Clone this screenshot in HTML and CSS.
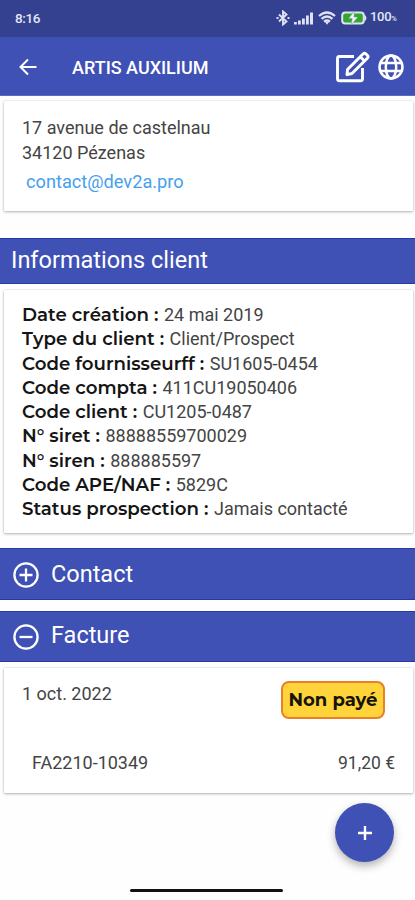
FILE: index.html
```html
<!DOCTYPE html>
<html lang="fr">
<head>
<meta charset="utf-8">
<meta name="viewport" content="width=device-width, initial-scale=1">
<title>ARTIS AUXILIUM</title>
<link rel="stylesheet" href="styles.css">
</head>
<body>
<header>
  <div class="status">
    <span class="time">8:16</span>
    <div class="status-icons">
      <svg class="bt" width="14" height="16" viewBox="0 0 14 16" fill="none" stroke="#dfe2f3" stroke-width="1.9"><path d="M3 4.500l7.500 7L7 14.500v-13l3.500 3L3 11.500"/><path d="M.5 8h2M11.500 8h2"/></svg>
      <svg class="signal" width="20" height="13" viewBox="0 0 20 13" fill="#dfe2f3"><path d="M0 10h2.800v2.500H0zM4 8.500h2.800v4H4zM8 6.500h2.800v6H8zM12 3.500h2.800v9H12zM16 .5h3v12h-3z"/></svg>
      <svg class="wifi" width="18" height="14" viewBox="0 0 18 14" fill="none" stroke="#dfe2f3" stroke-width="2.300"><path d="M1 5Q9-2 17 5M3.500 7.900q5.500-4.700 11 0M6 10.700q3-2.400 6 0"/><path d="M7 11h4L9 13.800z" fill="#dfe2f3" stroke="none"/></svg>
      <svg class="battery" width="26" height="14" viewBox="0 0 26 14"><rect x="1.200" y="1.500" width="21.600" height="11" rx="3" fill="#34a62f" stroke="#dfe2f3" stroke-width="2"/><path d="M23.500 3.500q4 3.500 0 7z" fill="#dfe2f3"/><path d="M13.500 0L7.500 7.500h3.700L10 14l7-8h-4z" fill="#eef0f5" stroke="#6b9c8b" stroke-width=".5"/></svg>
      <span class="percent">100<small>%</small></span>
    </div>
  </div>
  <div class="appbar">
    <svg class="back" width="18" height="18" viewBox="0 0 18 18" fill="none" stroke="#fff" stroke-width="2"><path d="M17.500 9H2M9 1.500L1.500 9 9 16.500"/></svg>
    <h1>ARTIS AUXILIUM</h1>
    <svg class="edit" width="36" height="32" viewBox="0 0 36 32" fill="none" stroke="#fff" stroke-width="2.900" stroke-linejoin="round"><path d="M19 5.500H4.500Q2.500 5.500 2.500 7.500v20.300q0 2 2 2h21q2 0 2-2V17"/><path d="M12.500 18.500L28 3q1.500-1.300 3 0l1.300 1.300q1.500 1.500 0 3L17 22.500l-5 1.200zM25.500 6l4 4"/></svg>
    <svg class="globe" width="26" height="26" viewBox="0 0 26 26" fill="none" stroke="#fff" stroke-width="2.500"><circle cx="13" cy="13" r="11.500"/><ellipse cx="13" cy="13" rx="5.200" ry="11.500"/><path d="M2.300 9h21.400M2.300 17h21.400"/></svg>
  </div>
</header>
<main>
  <section class="card address">
    <p class="street">17 avenue de castelnau</p>
    <p class="city">34120 Pézenas</p>
    <a class="mail">contact@dev2a.pro</a>
  </section>
  <h2 class="bar info-bar"><span>Informations client</span></h2>
  <dl class="card info">
    <div><dt>Date création :</dt><dd>24 mai 2019</dd></div>
    <div><dt>Type du client :</dt><dd>Client/Prospect</dd></div>
    <div><dt>Code fournisseurff :</dt><dd>SU1605-0454</dd></div>
    <div><dt>Code compta :</dt><dd>411CU19050406</dd></div>
    <div><dt>Code client :</dt><dd>CU1205-0487</dd></div>
    <div><dt>N° siret :</dt><dd>88888559700029</dd></div>
    <div><dt>N° siren :</dt><dd>888885597</dd></div>
    <div><dt>Code APE/NAF :</dt><dd>5829C</dd></div>
    <div><dt>Status prospection :</dt><dd>Jamais contacté</dd></div>
  </dl>
  <h2 class="bar contact-bar">
    <svg width="26" height="26" viewBox="0 0 26 26" fill="none" stroke="#fff" stroke-width="2.300"><circle cx="13" cy="13" r="11.600"/><path d="M6.500 13h13M13 6.500v13"/></svg>
    <span>Contact</span>
  </h2>
  <h2 class="bar invoice-bar">
    <svg width="26" height="26" viewBox="0 0 26 26" fill="none" stroke="#fff" stroke-width="2.300"><circle cx="13" cy="13" r="11.600"/><path d="M6.500 13h13"/></svg>
    <span>Facture</span>
  </h2>
  <section class="card invoice">
    <div class="invoice-top"><span class="date">1 oct. 2022</span><strong class="badge">Non payé</strong></div>
    <div class="invoice-line"><span class="ref">FA2210-10349</span><span class="amount">91,20 €</span></div>
  </section>
</main>
<footer>
  <button class="fab" aria-label="Ajouter"><svg width="14" height="14" viewBox="0 0 14 14" fill="none" stroke="#fff" stroke-width="2.400"><path d="M0 7h14M7 0v14"/></svg></button>
  <div class="home"></div>
</footer>
</body>
</html>
```
FILE: styles.css
```css
* { box-sizing: border-box; }
body {
  margin: 0;
  width: 415px;
  height: 900px;
  overflow: hidden;
  background: #fefefe;
  color: #444;
  font: 400 18px/24px Roboto, sans-serif;
}
h1, h2, p, dl, dd { margin: 0; font-weight: 400; }
svg { display: block; flex: none; }

.status {
  height: 37px;
  padding: 0 16px 0 15px;
  display: flex;
  align-items: center;
  justify-content: space-between;
  background: #344190;
  color: #e3e6f6;
}
.time { margin-top: -2px; font-size: 13.500px; font-weight: 500; letter-spacing: -.4px; }
.status-icons { display: flex; align-items: center; margin-top: -1px; }
.signal { margin-left: 4px; }
.wifi { margin-left: 4px; }
.battery { margin-left: 5px; }
.percent { width: 29px; margin-left: 3px; font-size: 13px; font-weight: 500; letter-spacing: -.3px; white-space: nowrap; }
.percent small { font-size: 7.500px; }

.appbar {
  height: 59px;
  padding: 1px 11px 0 19px;
  display: flex;
  align-items: center;
  background: #3f51b5;
  color: #fff;
  border-bottom: 1px solid #5d6bc2;
}
.appbar h1 { margin: 2px auto 0 35px; font-size: 18px; font-weight: 500; white-space: nowrap; }
.edit { margin-right: 7px; }

.card {
  margin: 0 2px 0 4px;
  background: #fff;
  border-radius: 1px;
  box-shadow: 0 1px 3px rgba(0, 0, 0, .28), 0 0 2px rgba(0, 0, 0, .12);
}
.address { height: 110px; margin-top: 5px; padding: 15px 18px 0; }
.city { margin: 1px 0 5px; }
.mail { display: block; margin-left: 4px; color: #45a0ee; font-size: 18.200px; }

.bar {
  display: flex;
  align-items: center;
  background: #3f51b5;
  color: #fff;
  font-size: 23.500px;
  line-height: 30px;
  border: solid #2739a9;
  border-width: 1px 0;
}
.bar svg { margin: 2px 12px 0 13px; }
.info-bar { height: 46px; margin-top: 27px; padding: 0 11px 3px; }

.info { height: 243px; margin-top: 6px; padding: 13px 18px 0; }
.info div { display: flex; align-items: baseline; gap: 5.500px; height: 24.300px; white-space: nowrap; }
.info dt {
  font-family: Montserrat, Inter, sans-serif;
  font-size: 18.200px;
  font-weight: 600;
  color: #151515;
}

.contact-bar { height: 52px; margin-top: 15px; }
.invoice-bar { height: 51px; margin-top: 11px; }
.contact-bar span { margin-top: -1px; }
.invoice-bar span { margin-top: -3px; }
.invoice-bar svg { margin-top: 1px; }

.invoice { height: 125px; margin-top: 6px; padding: 14px 18px 0; }
.invoice-top { display: flex; justify-content: space-between; height: 69px; }
.badge {
  width: 104px;
  height: 38px;
  margin: -1px 10px 0 0;
  border: 2px solid #e98027;
  border-radius: 8px;
  background: #ffd43b;
  color: #17130a;
  font: 700 18px/35px Montserrat, Inter, sans-serif;
  text-align: center;
  white-space: nowrap;
}
.invoice-line { display: flex; justify-content: space-between; padding-left: 10px; }
.amount { font-size: 17.500px; }

footer {
  height: 108px;
  padding: 10px 21px 0;
  display: flex;
  flex-direction: column;
}
.fab {
  width: 59px;
  height: 59px;
  padding: 0;
  align-self: flex-end;
  display: flex;
  align-items: center;
  justify-content: center;
  border: 0;
  border-radius: 50%;
  background: #3f51b5;
  box-shadow: 0 4px 8px rgba(0, 0, 0, .3);
}
.home { width: 153px; height: 3px; margin: 27px 0 0 109px; border-radius: 2px; background: #111; }
```
